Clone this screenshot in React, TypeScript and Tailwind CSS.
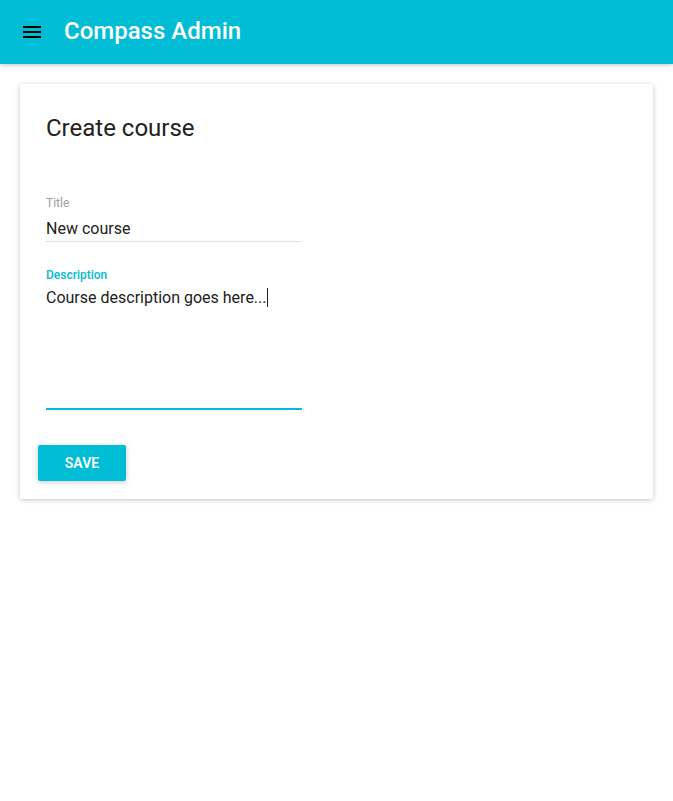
import React from 'react';

const MenuIcon = () => (
  <svg width="24" height="24" viewBox="0 0 24 24" className="block">
    <path d="M3 18h18v-2H3v2zm0-5h18v-2H3v2zm0-7v2h18V6H3z" fill="#000" />
  </svg>
);

const App: React.FC = () => {
  return (
    <div className="min-h-screen bg-white font-['Roboto',sans-serif]">
      <header className="h-16 bg-[#00bcd4] flex items-center shadow-[0_1px_6px_rgba(0,0,0,0.12),0_1px_4px_rgba(0,0,0,0.12)]">
        <div className="ml-5 mr-5">
          <MenuIcon />
        </div>
        <h1 className="text-[24px] leading-[64px] font-medium text-white mt-[-2px]">Compass Admin</h1>
      </header>

      <div className="mx-5 mt-5 bg-white rounded-[2px] shadow-[0_1px_6px_rgba(0,0,0,0.12),0_1px_4px_rgba(0,0,0,0.12)] pb-[18px]">
        <div className="pl-[26px] pt-7">
          <h2 className="text-[24px] leading-8 text-[#212121]">Create course</h2>
        </div>

        <div className="pl-[26px] mt-[51px] w-[282px]">
          <label className="block text-[12px] leading-4 text-[#9e9e9e]">Title</label>
          <div className="mt-[6px] text-[16px] leading-6 text-[#212121] border-b border-[#e0e0e0]">New course</div>

          <label className="block mt-[25px] text-[12px] leading-4 text-[#00bcd4] font-medium">Description</label>
          <div className="mt-[3px] h-[124px] text-[16px] leading-6 text-[#212121] border-b-2 border-[#00bcd4]">
            Course description goes here...
            <span className="inline-block w-px h-[19px] bg-[#212121] align-[-4px]" />
          </div>
        </div>

        <div className="pl-[18px] mt-[35px]">
          <button className="w-[88px] h-9 bg-[#00bcd4] text-white text-[14px] font-semibold uppercase rounded-[2px] shadow-[0_1px_6px_rgba(0,0,0,0.12),0_1px_4px_rgba(0,0,0,0.12)]">
            Save
          </button>
        </div>
      </div>
    </div>
  );
};

export default App;
